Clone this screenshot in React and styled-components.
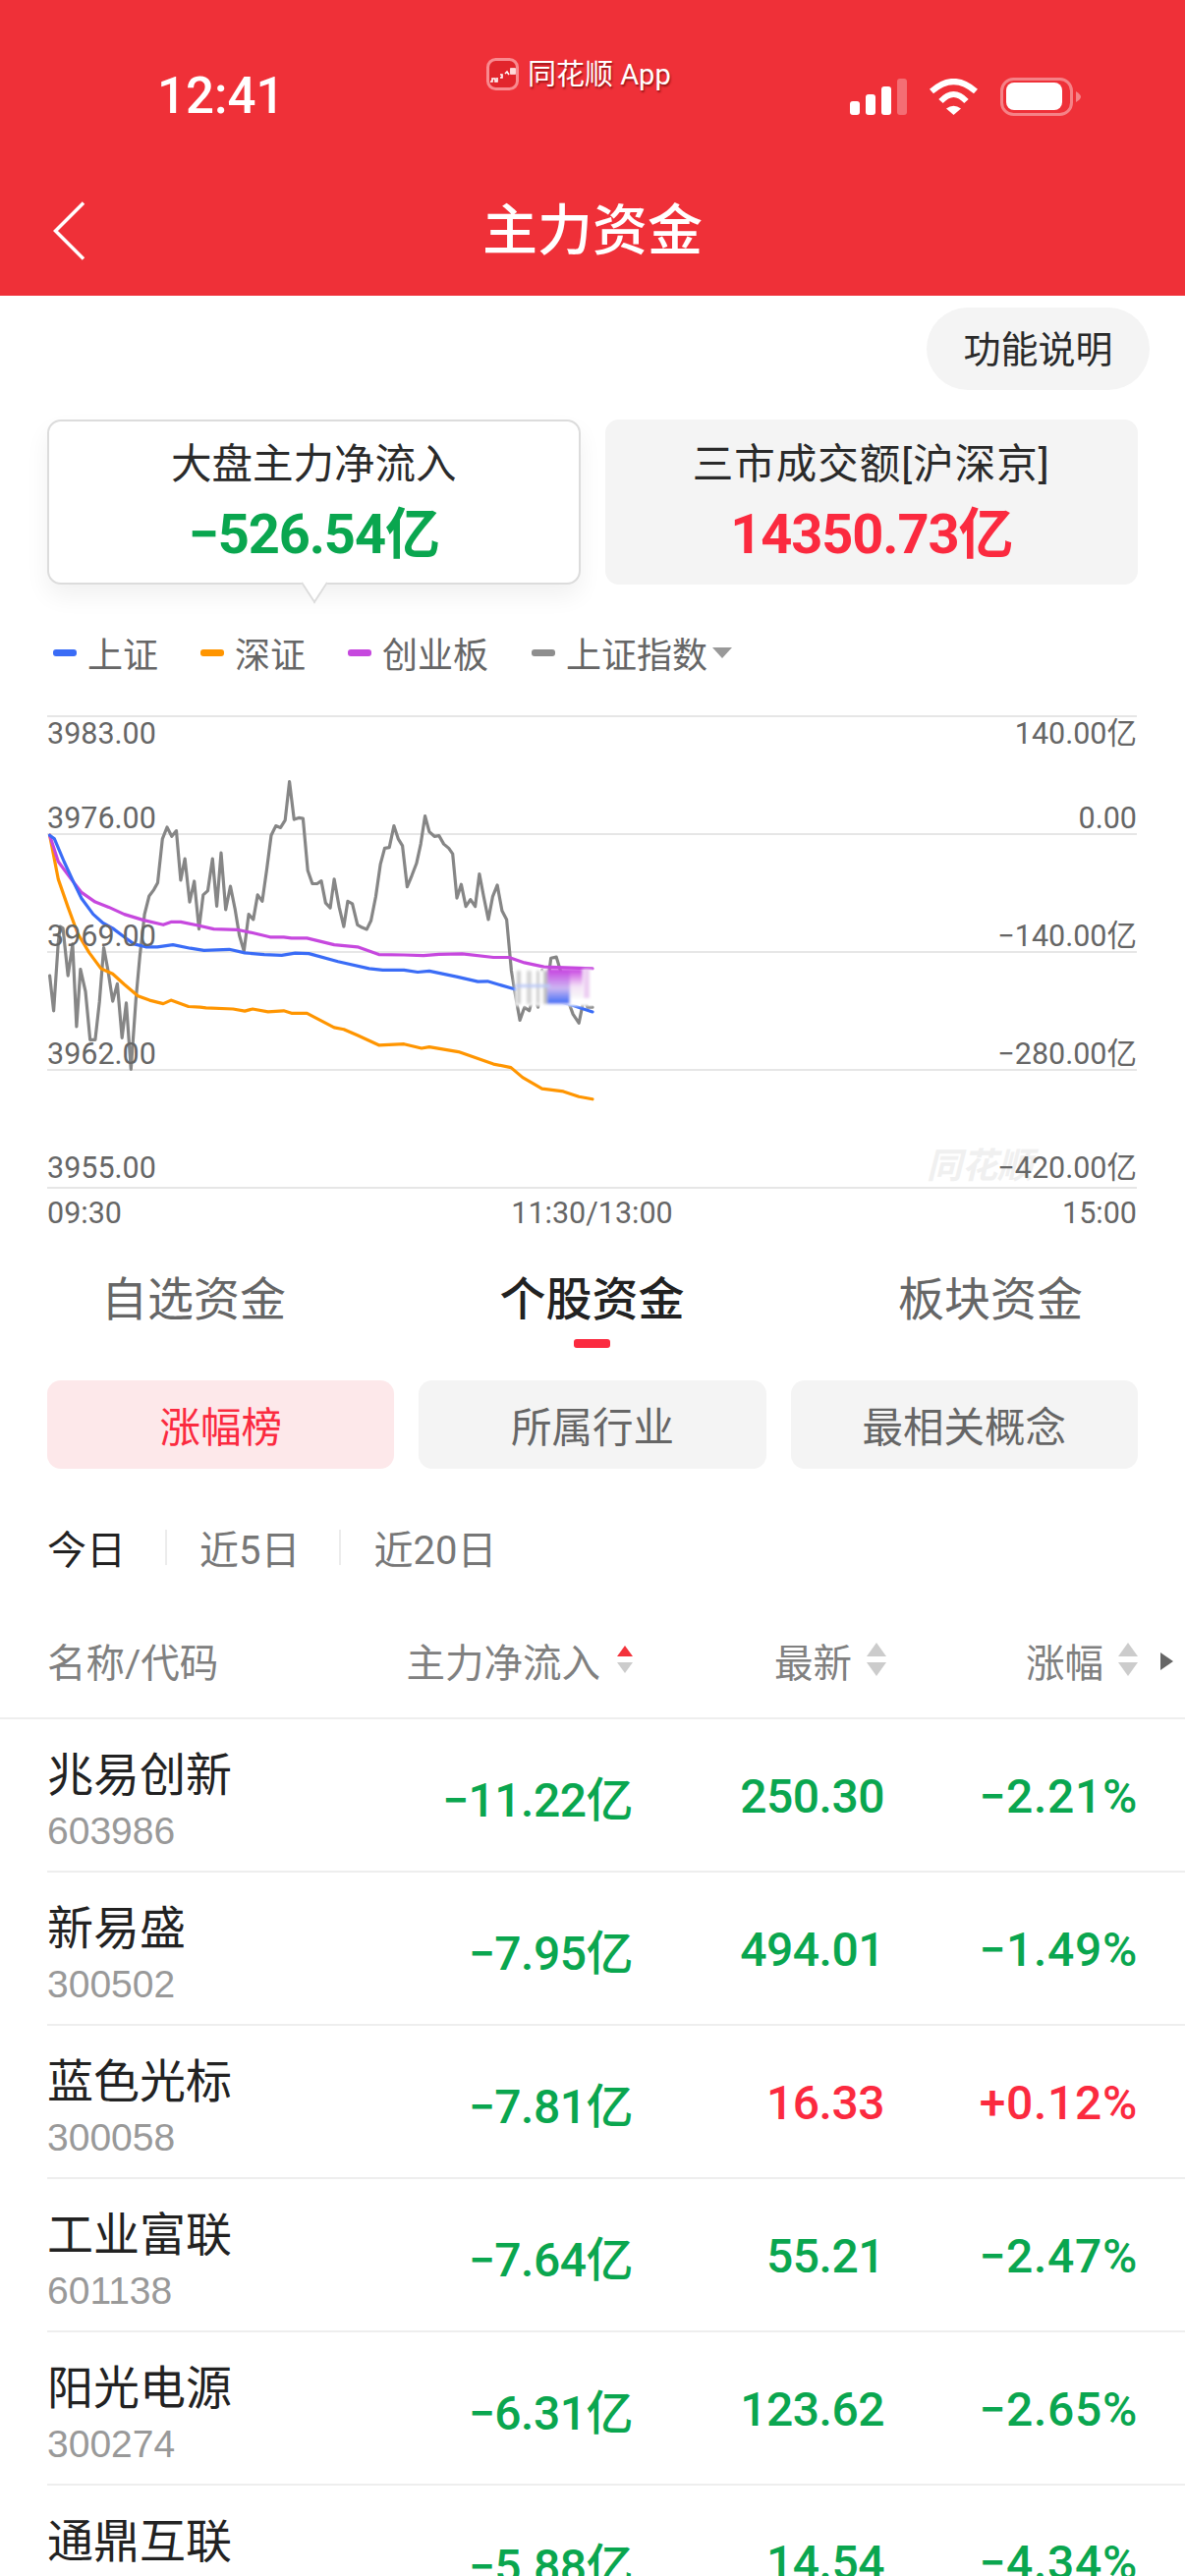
import styled, { createGlobalStyle } from "styled-components";

const GlobalStyle = createGlobalStyle`
  html, body {
    margin: 0;
    padding: 0;
    background: #fff;
  }
  body {
    font-family: Roboto, "Noto Sans CJK SC", sans-serif;
  }
`;

const RED = "#fb2a3f";
const GREEN = "#0aa64f";

const Page = styled.div`
  width: 1206px;
  height: 2622px;
  overflow: hidden;
  background: #fff;
`;

const Header = styled.header`
  height: 301px;
  background: #ef3038;
  color: #fff;
`;

const StatusBar = styled.div`
  display: flex;
  align-items: center;
  height: 66px;
  padding: 65px 106px 0 160px;
`;

const Time = styled.div`
  font-size: 51px;
  line-height: 66px;
  font-weight: 500;
  width: 124px;
  white-space: nowrap;
`;

const AppBadge = styled.div`
  display: flex;
  align-items: center;
  gap: 9px;
  margin: -45px 0 0 211px;
  font-size: 29px;
  line-height: 34px;
  text-shadow: 1px 2px 2px rgba(90, 0, 0, 0.6);
`;

const StatusIcons = styled.div`
  display: flex;
  align-items: center;
  margin-left: auto;
  gap: 22px;
`;

const NavBar = styled.div`
  position: relative;
  display: flex;
  align-items: center;
  justify-content: center;
  height: 98px;
  padding: 50px 0 0;
`;

const BackIcon = styled.svg`
  position: absolute;
  left: 54px;
  top: 74px;
`;

const NavTitle = styled.h1`
  margin: 0;
  font-family: "Noto Sans CJK SC", sans-serif;
  font-size: 56px;
  line-height: 70px;
  font-weight: 500;
`;

const HelpRow = styled.div`
  display: flex;
  justify-content: flex-end;
  padding: 12px 36px 0 0;
`;

const HelpPill = styled.div`
  box-sizing: border-box;
  display: flex;
  align-items: center;
  justify-content: center;
  width: 227px;
  height: 84px;
  padding-bottom: 5px;
  border-radius: 42px;
  background: #f4f4f4;
  color: #2a2a2a;
  font-size: 38px;
`;

const Cards = styled.div`
  display: grid;
  grid-template-columns: 1fr 1fr;
  gap: 25px;
  margin-top: 30px;
  padding: 0 48px;
`;

const Card = styled.div`
  position: relative;
  box-sizing: border-box;
  height: 168px;
  display: flex;
  flex-direction: column;
  align-items: center;
  border-radius: 14px;
  background: ${(p) => (p.$active ? "#fff" : "#f4f4f4")};
  border: 2px solid ${(p) => (p.$active ? "#dcdcdc" : "#f4f4f4")};
  box-shadow: ${(p) => (p.$active ? "0 12px 24px rgba(0, 0, 0, 0.06)" : "none")};
`;

const CardPointer = styled.span`
  position: absolute;
  left: 258px;
  bottom: -13px;
  width: 22px;
  height: 22px;
  background: #fff;
  border-right: 2px solid #dcdcdc;
  border-bottom: 2px solid #dcdcdc;
  transform: rotate(45deg) skew(12deg, 12deg);
`;

const CardLabel = styled.div`
  margin-top: 19px;
  font-size: 41.5px;
  line-height: 50px;
  letter-spacing: ${(p) => p.$spread || 0}px;
  color: #2a2a2a;
  white-space: nowrap;
`;

const CardValue = styled.div`
  margin-top: 11px;
  font-size: 56px;
  line-height: 70px;
  font-weight: 700;
  letter-spacing: -1.1px;
  color: ${(p) => p.$color};
`;

const Legend = styled.div`
  display: flex;
  align-items: center;
  height: 40px;
  margin-top: 49px;
  padding-left: 54px;
  font-size: 36px;
  color: #666;
`;

const LegendItem = styled.div`
  display: flex;
  align-items: center;
  gap: 11px;
  margin-right: ${(p) => p.$gap}px;
  white-space: nowrap;
`;

const LegendDash = styled.span`
  width: 24px;
  height: 7px;
  border-radius: 3px;
  background: ${(p) => p.$color};
`;

const Caret = styled.span`
  width: 0;
  height: 0;
  margin-left: -2px;
  border-left: 10px solid transparent;
  border-right: 10px solid transparent;
  border-top: 11px solid #999;
`;

const Chart = styled.div`
  position: relative;
  margin: 44px 49px 0 48px;
  border-top: 2px solid #e6e6e6;
`;

const AxisRow = styled.div`
  box-sizing: border-box;
  display: flex;
  justify-content: space-between;
  align-items: ${(p) => (p.$top ? "flex-start" : "flex-end")};
  height: ${(p) => p.$h}px;
  padding: ${(p) => (p.$top ? "2px" : "0")} 0 ${(p) => p.$pad || 0}px;
  border-bottom: ${(p) => (p.$top ? "none" : "2px solid #e6e6e6")};
`;

const AxisLabel = styled.span`
  position: relative;
  z-index: 1;
  font-size: 30.5px;
  line-height: 30px;
  color: #666;
  white-space: nowrap;
`;

const Plot = styled.svg`
  position: absolute;
  left: 0;
  top: 0;
  overflow: visible;
`;

const Watermark = styled.div`
  position: absolute;
  right: 106px;
  bottom: 4px;
  font-size: 36px;
  line-height: 38px;
  font-weight: 700;
  font-style: italic;
  color: #f0f0f0;
`;

const TimeAxis = styled.div`
  display: flex;
  justify-content: space-between;
  margin: 10px 49px 0 48px;
`;

const Tabs = styled.div`
  display: flex;
  justify-content: space-between;
  margin-top: 43px;
  padding: 0 104px 0 103px;
`;

const Tab = styled.div`
  display: flex;
  flex-direction: column;
  align-items: center;
  font-size: 47px;
  line-height: 60px;
  font-weight: ${(p) => (p.$active ? 500 : 400)};
  color: ${(p) => (p.$active ? "#222" : "#666")};
`;

const TabMark = styled.span`
  width: 37px;
  height: 9px;
  margin-top: 10px;
  border-radius: 3px;
  background: ${(p) => (p.$active ? RED : "transparent")};
`;

const Filters = styled.div`
  display: grid;
  grid-template-columns: repeat(3, 1fr);
  gap: 25px;
  margin-top: 33px;
  padding: 0 48px;
`;

const Filter = styled.div`
  display: flex;
  align-items: center;
  justify-content: center;
  height: 90px;
  border-radius: 14px;
  font-size: 41.5px;
  background: ${(p) => (p.$active ? "#fde8ea" : "#f4f4f4")};
  color: ${(p) => (p.$active ? RED : "#666")};
`;

const Periods = styled.div`
  display: flex;
  align-items: center;
  height: 50px;
  margin-top: 55px;
  padding-left: 48px;
  font-size: 40px;
`;

const Period = styled.span`
  color: ${(p) => (p.$active ? "#222" : "#777")};
`;

const PeriodDivider = styled.span`
  width: 2px;
  height: 36px;
  margin: 0 33px 0 40px;
  background: #ececec;
`;

const TableHead = styled.div`
  position: relative;
  box-sizing: border-box;
  display: grid;
  grid-template-columns: 1fr 342px 256px 256px;
  align-items: center;
  height: 110px;
  margin-top: 40px;
  padding: 0 48px 10px;
  border-bottom: 2px solid #eeeeee;
  font-size: 39.5px;
  color: #808080;
`;

const HeadCell = styled.div`
  display: flex;
  justify-content: ${(p) => (p.$left ? "flex-start" : "flex-end")};
  align-items: center;
  gap: 15px;
  white-space: nowrap;
`;

const MoreArrow = styled.svg`
  position: absolute;
  right: 12px;
  top: 42px;
`;

const StockRow = styled.div`
  box-sizing: border-box;
  display: grid;
  grid-template-columns: 256px 340px 256px 258px;
  height: 156px;
  margin-left: 48px;
  padding-right: 48px;
  border-bottom: 2px solid #eeeeee;
`;

const NameCell = styled.div`
  display: flex;
  flex-direction: column;
  padding-top: 29px;
`;

const StockName = styled.div`
  font-size: 47px;
  line-height: 56px;
  color: #222;
  white-space: nowrap;
`;

const StockCode = styled.div`
  margin-top: 7px;
  font-family: "Liberation Sans", sans-serif;
  font-size: 39px;
  line-height: 44px;
  color: #999;
`;

const ValueCell = styled.div`
  display: flex;
  align-items: center;
  justify-content: flex-end;
  padding-top: 2px;
  font-size: 48px;
  font-weight: 500;
  letter-spacing: ${(p) => (p.$wide ? "0.7px" : "-0.5px")};
  white-space: nowrap;
  color: ${(p) => (p.$up ? RED : GREEN)};
`;

const toPoints = (list) =>
  list
    .map(([x, y]) => `${(x / 2.529 - 48).toFixed(1)},${(y / 2.8 - 28).toFixed(1)}`)
    .join(" ");

// traced from the reference crop, see toPoints for the scale
const grayLine = [
  [128,815],[138,915],[150,720],[155,675],[162,680],[175,815],[187,725],[197,960],[207,797],[220,860],[232,998],[245,998],
  [256,890],[267,735],[278,800],[290,888],[302,838],[314,992],[325,893],[337,1082],[350,880],[360,760],[372,640],[384,588],
  [396,570],[406,550],[418,425],[430,392],[442,418],[454,402],[465,543],[476,482],[488,605],[500,546],[512,682],[523,585],
  [535,573],[547,482],[558,617],[569,465],[581,627],[593,560],[605,625],[616,700],[628,745],[640,640],[652,655],[663,585],
  [675,603],[687,510],[698,415],[710,388],[722,393],[734,372],[745,262],[757,370],[769,365],[780,367],[792,515],[804,553],
  [816,553],[827,545],[838,608],[850,622],[860,540],[873,620],[885,675],[895,603],[907,610],[920,670],[932,678],[944,683],
  [955,658],[967,590],[979,498],[990,452],[1002,450],[1014,388],[1025,425],[1036,445],[1048,562],[1060,530],[1072,495],
  [1083,440],[1094,360],[1105,405],[1118,418],[1130,416],[1142,440],[1155,452],[1165,468],[1176,594],[1187,555],[1199,618],
  [1211,598],[1223,618],[1234,525],[1245,590],[1257,655],[1268,590],[1280,557],[1292,630],[1304,655],[1316,800],[1328,880],
  [1338,942],[1350,905],[1362,915],[1373,870],[1385,905],[1395,800],[1408,850],[1418,765],[1432,762],[1445,810],[1460,880],
  [1475,925],[1490,950],[1503,880],[1512,905],[1525,905],
];

const purpleLine = [
  [128,415],[150,490],[180,535],[210,578],[245,605],[280,620],[320,640],[370,657],[420,670],[440,662],[465,662],[510,672],
  [550,682],[610,684],[650,693],[695,705],[730,705],[750,708],[790,708],[860,727],[920,733],[975,755],[1040,756],[1090,758],
  [1130,754],[1190,753],[1270,763],[1310,763],[1350,778],[1400,790],[1525,795],
];

const blueLine = [
  [128,415],[140,425],[165,490],[190,550],[210,595],[240,640],[265,665],[290,680],[320,705],[345,725],[375,733],[405,733],
  [445,727],[490,737],[525,743],[590,740],[630,750],[680,755],[725,757],[760,751],[795,752],[870,775],[950,795],[985,799],
  [1040,799],[1075,805],[1105,802],[1175,818],[1230,832],[1255,831],[1320,852],[1460,895],[1525,918],
];

const orangeLine = [
  [128,415],[150,540],[175,620],[200,695],[230,750],[260,795],[290,810],[320,840],[355,873],[385,885],[420,895],[440,885],
  [485,903],[515,905],[530,907],[600,910],[630,916],[650,910],[690,918],[730,915],[750,922],[790,922],[860,963],[885,968],
  [920,985],[975,1013],[1040,1010],[1085,1022],[1105,1018],[1180,1032],[1270,1067],[1315,1077],[1345,1105],[1395,1137],
  [1450,1145],[1490,1160],[1525,1167],
];

const stocks = [
  { name: "兆易创新", code: "603986", flow: "−11.22亿", price: "250.30", pct: "−2.21%" },
  { name: "新易盛", code: "300502", flow: "−7.95亿", price: "494.01", pct: "−1.49%" },
  { name: "蓝色光标", code: "300058", flow: "−7.81亿", price: "16.33", pct: "+0.12%", up: true },
  { name: "工业富联", code: "601138", flow: "−7.64亿", price: "55.21", pct: "−2.47%" },
  { name: "阳光电源", code: "300274", flow: "−6.31亿", price: "123.62", pct: "−2.65%" },
  { name: "通鼎互联", code: "002491", flow: "−5.88亿", price: "14.54", pct: "−4.34%" },
];

const axisRows = [
  { left: "3976.00", right: "0.00", h: 82 },
  { left: "3969.00", right: "−140.00亿", h: 120 },
  { left: "3962.00", right: "−280.00亿", h: 120 },
  { left: "3955.00", right: "−420.00亿", h: 120, pad: 4 },
];

const SortIcon = ({ active }) => (
  <svg width="20" height="34" viewBox="0 0 20 34">
    <path d={active ? "M10 3 L18 14 H2 Z" : "M10 0 L20 14 H0 Z"} fill={active ? "#f3323b" : "#cccccc"} />
    <path d={active ? "M2 20 H18 L10 31 Z" : "M0 20 H20 L10 34 Z"} fill="#cccccc" />
  </svg>
);

const AppLogo = () => (
  <svg width="33" height="33" viewBox="0 0 33 33">
    <rect x="1.5" y="1.5" width="30" height="30" rx="8" fill="#e2252c" stroke="#f98a8f" strokeWidth="3" />
    <path d="M4 24h2v-3h3v3h2v-4 M14 17h2v3h-2 M19 16l2-2 2 3 M25 11h4v5h-4z" fill="none" stroke="#fff" strokeWidth="1.6" />
    <rect x="25" y="11" width="4" height="5" fill="#ffd9d9" />
  </svg>
);

const SignalIcon = () => (
  <svg width="58" height="37" viewBox="0 0 58 37">
    <rect x="0" y="23" width="10" height="14" rx="3" fill="#fff" />
    <rect x="16" y="16" width="10" height="21" rx="3" fill="#fff" />
    <rect x="32" y="8" width="10" height="29" rx="3" fill="#fff" />
    <rect x="48" y="0" width="10" height="37" rx="3" fill="#fff" opacity="0.3" />
  </svg>
);

const WifiIcon = () => (
  <svg width="51" height="37" viewBox="0 0 51 37">
    <path d="M3 13 Q25.5 -7 48 13" fill="none" stroke="#fff" strokeWidth="6" />
    <path d="M12.5 23 Q25.5 9 38.5 23" fill="none" stroke="#fff" strokeWidth="6" />
    <path d="M18 30.5 Q25.5 25 33 30.5 L25.5 37 Z" fill="#fff" />
  </svg>
);

const BatteryIcon = () => (
  <svg width="82" height="39" viewBox="0 0 82 39">
    <rect x="1.5" y="1.5" width="71" height="36" rx="12" fill="none" stroke="#fff" strokeOpacity="0.4" strokeWidth="3" />
    <rect x="6" y="5" width="57" height="28" rx="8" fill="#fff" />
    <path d="M77 14 Q82 17 82 19.5 Q82 22 77 25 Z" fill="#fff" opacity="0.4" />
  </svg>
);

const PriceChart = () => (
  <Plot width="1109" height="481" viewBox="0 0 1109 481">
    <defs>
      <linearGradient id="censorFade" x1="0" y1="0" x2="0" y2="1">
        <stop offset="0" stopColor="#c63ee0" />
        <stop offset="0.55" stopColor="#cdb6f2" />
        <stop offset="1" stopColor="#3a6cf6" />
      </linearGradient>
      <linearGradient id="censorTop" x1="0" y1="0" x2="0" y2="1">
        <stop offset="0" stopColor="#c63ee0" />
        <stop offset="0.6" stopColor="#f3e2f6" />
        <stop offset="1" stopColor="#f8f8f8" />
      </linearGradient>
      <filter id="soft" x="-10%" y="-10%" width="120%" height="120%">
        <feGaussianBlur stdDeviation="1.6" />
      </filter>
    </defs>
    <g fill="none" strokeWidth="3.2" strokeLinejoin="round" strokeLinecap="round">
      <polyline points={toPoints(grayLine)} stroke="#868686" />
      <polyline points={toPoints(orangeLine)} stroke="#ff9500" />
      <polyline points={toPoints(purpleLine)} stroke="#c648de" />
      <polyline points={toPoints(blueLine)} stroke="#3a6cf6" />
    </g>
    {/* smeared patch sitting on the lines in the screenshot */}
    <g filter="url(#soft)">
      <rect x="476" y="257" width="80" height="37" fill="#fff" />
      <rect x="478" y="258" width="4" height="34" fill="#c8c8c8" />
      <rect x="488" y="258" width="5" height="34" fill="#d4d4d4" />
      <rect x="498" y="258" width="3" height="34" fill="#c8c8c8" />
      <rect x="505" y="258" width="4" height="34" fill="#bdbdbd" />
      <rect x="509" y="256" width="23" height="36" fill="url(#censorFade)" />
      <rect x="532" y="256" width="13" height="30" fill="url(#censorTop)" />
      <rect x="546" y="256" width="6" height="30" fill="#eccdf2" />
      <rect x="476" y="272" width="36" height="3" fill="#b9c8f6" />
    </g>
  </Plot>
);

const App = () => {
  return (
    <Page>
      <GlobalStyle />
      <Header>
        <StatusBar>
          <Time>12:41</Time>
          <AppBadge>
            <AppLogo />
            <span>同花顺 App</span>
          </AppBadge>
          <StatusIcons>
            <SignalIcon />
            <WifiIcon />
            <BatteryIcon />
          </StatusIcons>
        </StatusBar>
        <NavBar>
          <BackIcon width="33" height="60" viewBox="0 0 33 60">
            <path d="M31 1.5 L2.5 30 L31 58.5" fill="none" stroke="#fff" strokeWidth="3.5" />
          </BackIcon>
          <NavTitle>主力资金</NavTitle>
        </NavBar>
      </Header>

      <HelpRow>
        <HelpPill>功能说明</HelpPill>
      </HelpRow>

      <Cards>
        <Card $active>
          <CardLabel>大盘主力净流入</CardLabel>
          <CardValue $color={GREEN}>−526.54亿</CardValue>
          <CardPointer />
        </Card>
        <Card>
          <CardLabel $spread={1}>三市成交额[沪深京]</CardLabel>
          <CardValue $color={RED}>14350.73亿</CardValue>
        </Card>
      </Cards>

      <Legend>
        <LegendItem $gap={43}>
          <LegendDash $color="#3a6cf6" />上证
        </LegendItem>
        <LegendItem $gap={43}>
          <LegendDash $color="#ff9500" />深证
        </LegendItem>
        <LegendItem $gap={44}>
          <LegendDash $color="#c648de" />创业板
        </LegendItem>
        <LegendItem $gap={7}>
          <LegendDash $color="#8e8e8e" />上证指数
        </LegendItem>
        <Caret />
      </Legend>

      <Chart>
        <AxisRow $top $h={38}>
          <AxisLabel>3983.00</AxisLabel>
          <AxisLabel>140.00亿</AxisLabel>
        </AxisRow>
        {axisRows.map((row) => (
          <AxisRow key={row.left} $h={row.h} $pad={row.pad}>
            <AxisLabel>{row.left}</AxisLabel>
            <AxisLabel>{row.right}</AxisLabel>
          </AxisRow>
        ))}
        <Watermark>同花顺</Watermark>
        <PriceChart />
      </Chart>
      <TimeAxis>
        <AxisLabel>09:30</AxisLabel>
        <AxisLabel>11:30/13:00</AxisLabel>
        <AxisLabel>15:00</AxisLabel>
      </TimeAxis>

      <Tabs>
        <Tab>
          自选资金
          <TabMark />
        </Tab>
        <Tab $active>
          个股资金
          <TabMark $active />
        </Tab>
        <Tab>
          板块资金
          <TabMark />
        </Tab>
      </Tabs>

      <Filters>
        <Filter $active>涨幅榜</Filter>
        <Filter>所属行业</Filter>
        <Filter>最相关概念</Filter>
      </Filters>

      <Periods>
        <Period $active>今日</Period>
        <PeriodDivider />
        <Period>近5日</Period>
        <PeriodDivider />
        <Period>近20日</Period>
      </Periods>

      <TableHead>
        <HeadCell $left>名称/代码</HeadCell>
        <HeadCell>
          主力净流入
          <SortIcon active />
        </HeadCell>
        <HeadCell>
          最新
          <SortIcon />
        </HeadCell>
        <HeadCell>
          涨幅
          <SortIcon />
        </HeadCell>
        <MoreArrow width="13" height="18" viewBox="0 0 13 18">
          <path d="M0 0 L13 9 L0 18 Z" fill="#666" />
        </MoreArrow>
      </TableHead>

      {stocks.map((stock) => (
        <StockRow key={stock.code}>
          <NameCell>
            <StockName>{stock.name}</StockName>
            <StockCode>{stock.code}</StockCode>
          </NameCell>
          <ValueCell>{stock.flow}</ValueCell>
          <ValueCell $up={stock.up}>{stock.price}</ValueCell>
          <ValueCell $up={stock.up} $wide>{stock.pct}</ValueCell>
        </StockRow>
      ))}
    </Page>
  );
};

export default App;
